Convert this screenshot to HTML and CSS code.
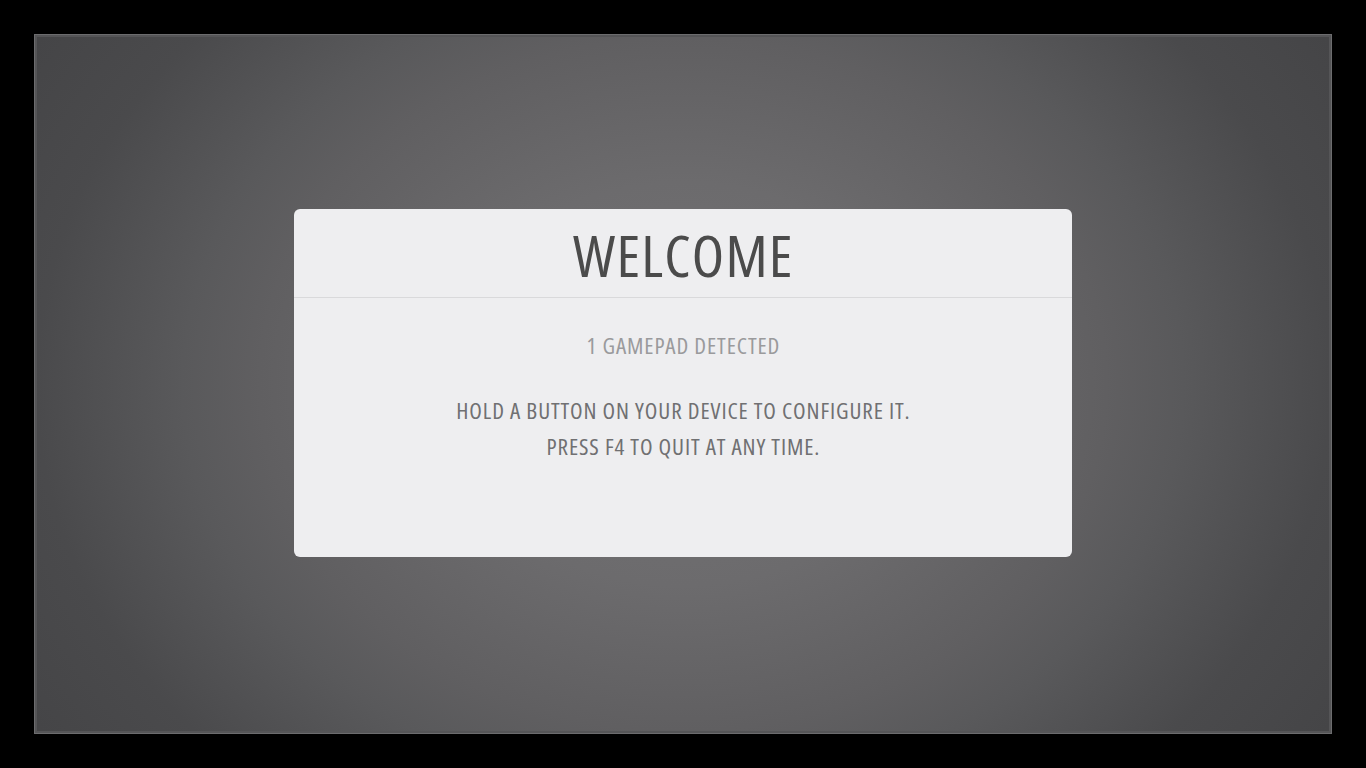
FILE: index.html
```html
<!DOCTYPE html>
<html lang="en">
<head>
<meta charset="utf-8">
<title>Welcome</title>
<link rel="stylesheet" href="styles.css">
</head>
<body>
<div class="screen">
  <main class="stage">
    <section class="dialog">
      <header class="dialog-header">
        <h1 class="title">WELCOME</h1>
      </header>
      <div class="dialog-body">
        <p class="detected">1 GAMEPAD DETECTED</p>
        <p class="instructions">HOLD A BUTTON ON YOUR DEVICE TO CONFIGURE IT.<br>PRESS F4 TO QUIT AT ANY TIME.</p>
      </div>
    </section>
  </main>
</div>
</body>
</html>
```
FILE: styles.css
```css
html, body {
  margin: 0;
  padding: 0;
  background: #000;
  width: 1366px;
  height: 768px;
  overflow: hidden;
}

.screen {
  box-sizing: border-box;
  width: 1366px;
  height: 768px;
  padding: 34px;
  display: flex;
}

.stage {
  box-sizing: border-box;
  flex: 1;
  height: 700px;
  border: 1px solid #6c6c6e;
  box-shadow: inset 0 0 0 2px #555557;
  background: radial-gradient(770px 630px at 50% 50%,
    #747375 0%,
    #6c6b6d 32%,
    #605f61 55%,
    #59595b 65%,
    #4a4a4c 84%,
    #454547 100%);
  display: flex;
  justify-content: center;
  padding-top: 174px;
}

.dialog {
  box-sizing: border-box;
  width: 778px;
  height: 348px;
  background: #eeeef0;
  border-radius: 6px;
  font-family: "Open Sans", "DejaVu Sans", sans-serif;
  font-stretch: 75%;
  text-align: center;
  display: flex;
  flex-direction: column;
}

.dialog-header {
  height: 88px;
  border-bottom: 1px solid #d9d9db;
  display: flex;
  align-items: center;
  justify-content: center;
}

.title {
  margin: 0;
  font-weight: 400;
  font-size: 57px;
  line-height: 1;
  color: #4b4b4b;
  letter-spacing: 1.2px;
  padding: 4px 0 0 1.2px;
  transform: scaleX(1.04);
}

.dialog-body {
  padding-top: 36px;
}

.detected {
  margin: 0;
  font-size: 21px;
  line-height: 24px;
  color: #9a9a9c;
  letter-spacing: 0.8px;
  padding-left: 0.8px;
  transform: scaleX(1.1);
}

.instructions {
  margin: 35px 0 0 0;
  font-size: 21px;
  line-height: 36px;
  color: #707072;
  letter-spacing: 0.8px;
  padding-left: 0.8px;
  transform: scaleX(1.1);
}
```
